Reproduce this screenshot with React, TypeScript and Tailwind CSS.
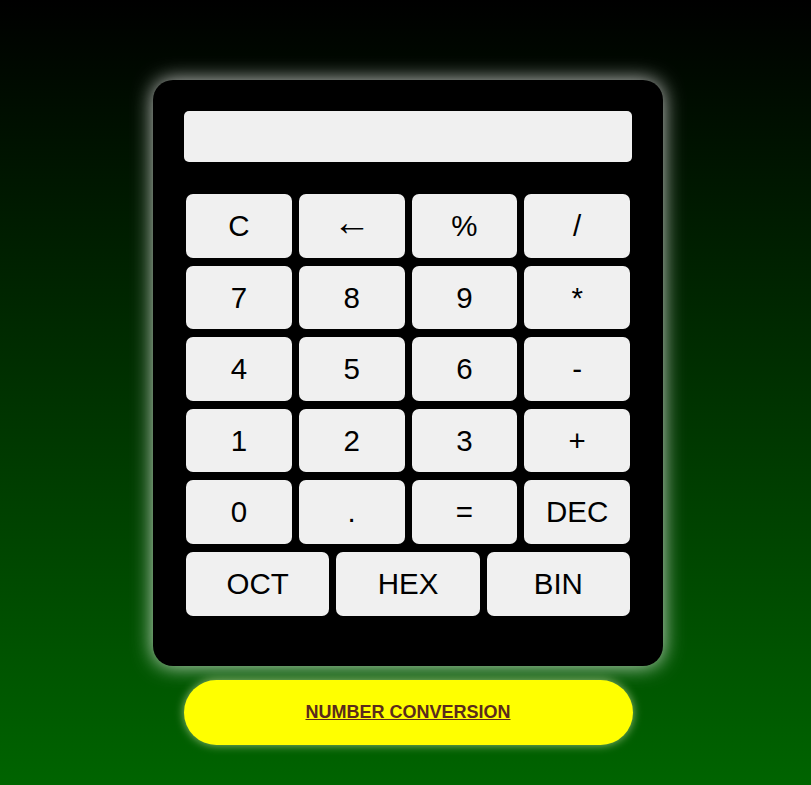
const keys = ['C', '←', '%', '/', '7', '8', '9', '*', '4', '5', '6', '-', '1', '2', '3', '+', '0', '.', '=', 'DEC'];
const bases = ['OCT', 'HEX', 'BIN'];

function Key({ label }: { label: string }) {
  const arrow = label === '←';
  return (
    <button
      className={
        'h-[63.6px] rounded-[7px] bg-[#f0f0f0] text-black leading-none ' +
        (arrow ? 'text-[38px] pb-[8px]' : 'text-[29.5px]')
      }
    >
      {label}
    </button>
  );
}

export default function App() {
  return (
    <main
      className="min-h-screen w-full bg-[linear-gradient(#000000,#006400)] flex flex-col items-center pt-20 pb-10"
      style={{ fontFamily: '"Liberation Sans", Arial, sans-serif' }}
    >
      <div className="ml-[5px] flex flex-col items-center">
        <div className="w-[510px] rounded-[20px] bg-black p-[31px] pb-[50px] shadow-[0_0_20px_rgba(255,255,255,0.8)]">
          <div className="h-[51px] w-full rounded-[5px] bg-[#f0f0f0]" />
          <div className="mt-8 px-[2px]">
            <div className="grid grid-cols-4 gap-x-[7px] gap-y-[8px]">
              {keys.map((k) => (
                <Key key={k} label={k} />
              ))}
            </div>
            <div className="mt-[8px] grid grid-cols-3 gap-x-[7px]">
              {bases.map((k) => (
                <Key key={k} label={k} />
              ))}
            </div>
          </div>
        </div>
        <button className="mt-[14px] h-[65px] w-[449px] rounded-full bg-[#ffff00] text-[18px] font-bold text-[#5a2b1c] underline shadow-[0_0_10px_rgba(255,255,200,0.6)]">
          NUMBER CONVERSION
        </button>
      </div>
    </main>
  );
}
